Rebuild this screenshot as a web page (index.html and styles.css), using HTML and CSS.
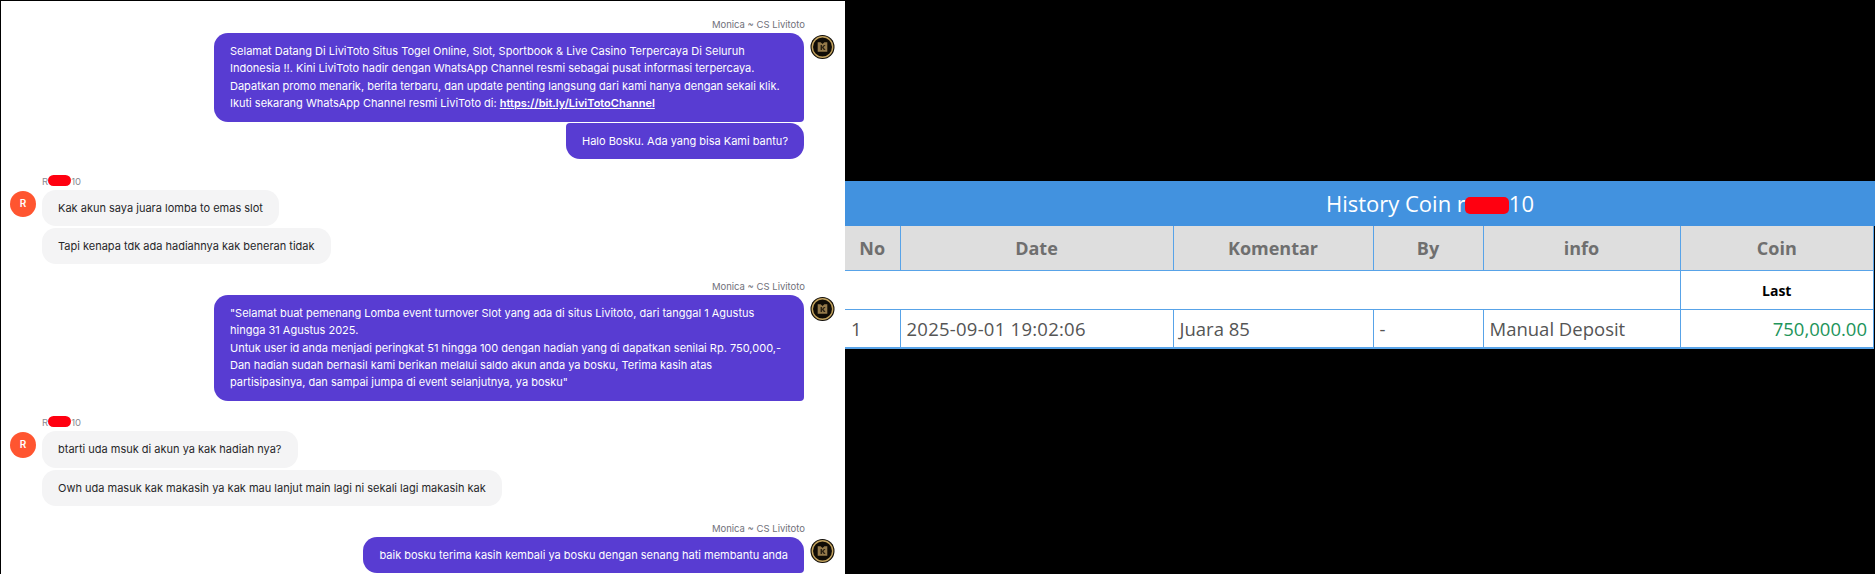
FILE: index.html
```html
<!DOCTYPE html>
<html lang="id">
<head>
    <meta charset="UTF-8">
    <meta name="viewport" content="width=device-width, initial-scale=1.0">
    <title>Chat dan History Coin</title>
    <link rel="stylesheet" href="styles.css">
</head>
<body>
    <div class="chat">
        <div class="msg-group agent first">
            <div class="sender">Monica ~ CS Livitoto</div>
            <div class="msg-body">
                <div class="bubbles">
                    <div class="bubble">Selamat Datang Di LiviToto Situs Togel Online, Slot, Sportbook &amp; Live Casino Terpercaya Di Seluruh Indonesia !!. Kini LiviToto hadir dengan WhatsApp Channel resmi sebagai pusat informasi terpercaya. Dapatkan promo menarik, berita terbaru, dan update penting langsung dari kami hanya dengan sekali klik. Ikuti sekarang WhatsApp Channel resmi LiviToto di: <a href="#">https://bit.ly/LiviTotoChannel</a></div>
                    <div class="bubble">Halo Bosku. Ada yang bisa Kami bantu?</div>
                </div>
                <svg class="avatar" viewBox="0 0 26 26">
                    <circle cx="13" cy="13" r="12.5" fill="#100c06"/>
                    <circle cx="13" cy="13" r="10.6" fill="none" stroke="#c2a25e" stroke-width="1.5"/>
                    <path d="M8 8h3l2 2 2-2h3v10H8z" fill="#94794a"/>
                    <path d="M11 11h1.5v2l2-2h1.7l-2.2 2.3 2.2 2.7h-1.8l-1.9-2.3V16H11z" fill="#2a2113"/>
                </svg>
            </div>
        </div>

        <div class="msg-group customer">
            <div class="sender">R<span class="redact"></span>10</div>
            <div class="msg-body">
                <div class="initial">R</div>
                <div class="bubbles">
                    <div class="bubble">Kak akun saya juara lomba to emas slot</div>
                    <div class="bubble">Tapi kenapa tdk ada hadiahnya kak beneran tidak</div>
                </div>
            </div>
        </div>

        <div class="msg-group agent">
            <div class="sender">Monica ~ CS Livitoto</div>
            <div class="msg-body">
                <div class="bubbles">
                    <div class="bubble">"Selamat buat pemenang Lomba event turnover Slot yang ada di situs Livitoto, dari tanggal 1 Agustus hingga 31 Agustus 2025.<br>Untuk user id anda menjadi peringkat 51 hingga 100 dengan hadiah yang di dapatkan senilai Rp. 750,000,-<br>Dan hadiah sudah berhasil kami berikan melalui saldo akun anda ya bosku, Terima kasih atas partisipasinya, dan sampai jumpa di event selanjutnya, ya bosku"</div>
                </div>
                <svg class="avatar" viewBox="0 0 26 26">
                    <circle cx="13" cy="13" r="12.5" fill="#100c06"/>
                    <circle cx="13" cy="13" r="10.6" fill="none" stroke="#c2a25e" stroke-width="1.5"/>
                    <path d="M8 8h3l2 2 2-2h3v10H8z" fill="#94794a"/>
                    <path d="M11 11h1.5v2l2-2h1.7l-2.2 2.3 2.2 2.7h-1.8l-1.9-2.3V16H11z" fill="#2a2113"/>
                </svg>
            </div>
        </div>

        <div class="msg-group customer">
            <div class="sender">R<span class="redact"></span>10</div>
            <div class="msg-body">
                <div class="initial">R</div>
                <div class="bubbles">
                    <div class="bubble">btarti uda msuk di akun ya kak hadiah nya?</div>
                    <div class="bubble">Owh uda masuk kak makasih ya kak mau lanjut main lagi ni sekali lagi makasih kak</div>
                </div>
            </div>
        </div>

        <div class="msg-group agent">
            <div class="sender">Monica ~ CS Livitoto</div>
            <div class="msg-body">
                <div class="bubbles">
                    <div class="bubble">baik bosku terima kasih kembali ya bosku dengan senang hati membantu anda</div>
                </div>
                <svg class="avatar" viewBox="0 0 26 26">
                    <circle cx="13" cy="13" r="12.5" fill="#100c06"/>
                    <circle cx="13" cy="13" r="10.6" fill="none" stroke="#c2a25e" stroke-width="1.5"/>
                    <path d="M8 8h3l2 2 2-2h3v10H8z" fill="#94794a"/>
                    <path d="M11 11h1.5v2l2-2h1.7l-2.2 2.3 2.2 2.7h-1.8l-1.9-2.3V16H11z" fill="#2a2113"/>
                </svg>
            </div>
        </div>
    </div>

    <div class="history">
        <div class="history-title">History Coin r<span class="redact-title"></span>10</div>
        <table class="history-table">
            <colgroup>
                <col class="col-no">
                <col class="col-date">
                <col class="col-comment">
                <col class="col-by">
                <col class="col-info">
                <col>
            </colgroup>
            <thead>
                <tr>
                    <th>No</th>
                    <th>Date</th>
                    <th>Komentar</th>
                    <th>By</th>
                    <th>info</th>
                    <th>Coin</th>
                </tr>
            </thead>
            <tbody>
                <tr class="last-row">
                    <td colspan="5"></td>
                    <td class="last">Last</td>
                </tr>
                <tr>
                    <td>1</td>
                    <td class="date">2025-09-01 19:02:06</td>
                    <td>Juara 85</td>
                    <td>-</td>
                    <td>Manual Deposit</td>
                    <td class="coin">750,000.00</td>
                </tr>
            </tbody>
        </table>
    </div>
</body>
</html>
```

FILE: styles.css
```css
:root {
    --purple: #583cd2;
    --bubble-grey: #f4f4f5;
    --table-blue: #4292df;
    --line-blue: #58a3e8;
}

* {
    box-sizing: border-box;
}

html, body {
    height: 100%;
}

body {
    margin: 0;
    background-color: #000000;
    display: flex;
    align-items: flex-start;
    overflow: hidden;
}

.chat {
    width: 844px;
    height: 573px;
    margin: 1px 0 0 1px;
    padding: 0 10px 0 9px;
    background-color: #ffffff;
    font-family: Inter, "Liberation Sans", sans-serif;
    font-size: 11px;
    line-height: 17.4px;
    flex: none;
}

.msg-group.agent {
    margin-top: 16.5px;
}

.msg-group.customer {
    margin-top: 15.5px;
}

.msg-group.first {
    margin-top: 18px;
}

.sender {
    font-size: 9.5px;
    line-height: 12px;
    color: #71717a;
    margin-bottom: 2px;
}

.agent .sender {
    text-align: right;
    padding-right: 30px;
}

.customer .sender {
    padding-left: 32px;
    color: #8a8a92;
}

.msg-body {
    display: flex;
    align-items: flex-start;
    gap: 6px;
}

.agent .msg-body {
    justify-content: flex-end;
}

.bubbles {
    display: flex;
    flex-direction: column;
    gap: 2px;
}

.agent .bubbles {
    align-items: flex-end;
    gap: 1px;
}

.customer .bubbles {
    align-items: flex-start;
}

.bubble {
    padding: 10px 16px 9px;
    border-radius: 14px;
    max-width: 590px;
}

.agent .bubble {
    background-color: var(--purple);
    color: #ffffff;
    border-radius: 14px 14px 4px 14px;
}

.agent .bubble + .bubble {
    border-radius: 4px 14px 14px 14px;
}

.agent .bubble a {
    color: #ffffff;
    font-weight: 600;
}

.customer .bubble {
    background-color: var(--bubble-grey);
    color: #27272a;
}

.avatar {
    width: 25px;
    height: 26px;
    margin-top: 1px;
    flex: none;
}

.initial {
    width: 26px;
    height: 26px;
    margin-top: 1px;
    border-radius: 50%;
    background-color: #ff5530;
    color: #ffffff;
    font-size: 10px;
    font-weight: 600;
    line-height: 24px;
    text-align: center;
    flex: none;
}

.redact {
    display: inline-block;
    width: 23px;
    height: 11px;
    margin-bottom: -1px;
    border-radius: 6px;
    background-color: #ff0010;
}

.history {
    flex: 1;
    margin-top: 181px;
    font-family: "Open Sans", "Noto Sans", sans-serif;
}

.history-title {
    height: 45px;
    padding-left: 140px;
    background-color: var(--table-blue);
    color: #ffffff;
    font-size: 22px;
    line-height: 44px;
    text-align: center;
}

.redact-title {
    display: inline-block;
    width: 44px;
    height: 17px;
    margin-left: -1px;
    margin-bottom: -2px;
    border-radius: 5px;
    background-color: #ff0010;
}

.history-table {
    width: 1029px;
    table-layout: fixed;
    border-collapse: collapse;
    background-color: #ffffff;
    color: #555555;
    font-size: 18.5px;
    border-bottom: 2px solid var(--line-blue);
}

.col-no {
    width: 55px;
}

.col-date {
    width: 273px;
}

.col-comment {
    width: 200px;
}

.col-by {
    width: 110px;
}

.col-info {
    width: 197px;
}

.history-table th,
.history-table td {
    height: 39px;
    padding: 0 6px;
    border: 1px solid var(--line-blue);
    text-align: left;
}

.history-table tr > :first-child {
    border-left: none;
}

.history-table th {
    height: 44px;
    background-color: #dedede;
    color: #6f6f6f;
    font-size: 18px;
    font-weight: 700;
    text-align: center;
    border-top: none;
}

.history-table td.date {
    letter-spacing: 0.25px;
}

.history-table td.last {
    padding-top: 2px;
    color: #000000;
    font-size: 14px;
    font-weight: 700;
    text-align: center;
}

.history-table td.coin {
    color: #22945a;
    text-align: right;
}
```
